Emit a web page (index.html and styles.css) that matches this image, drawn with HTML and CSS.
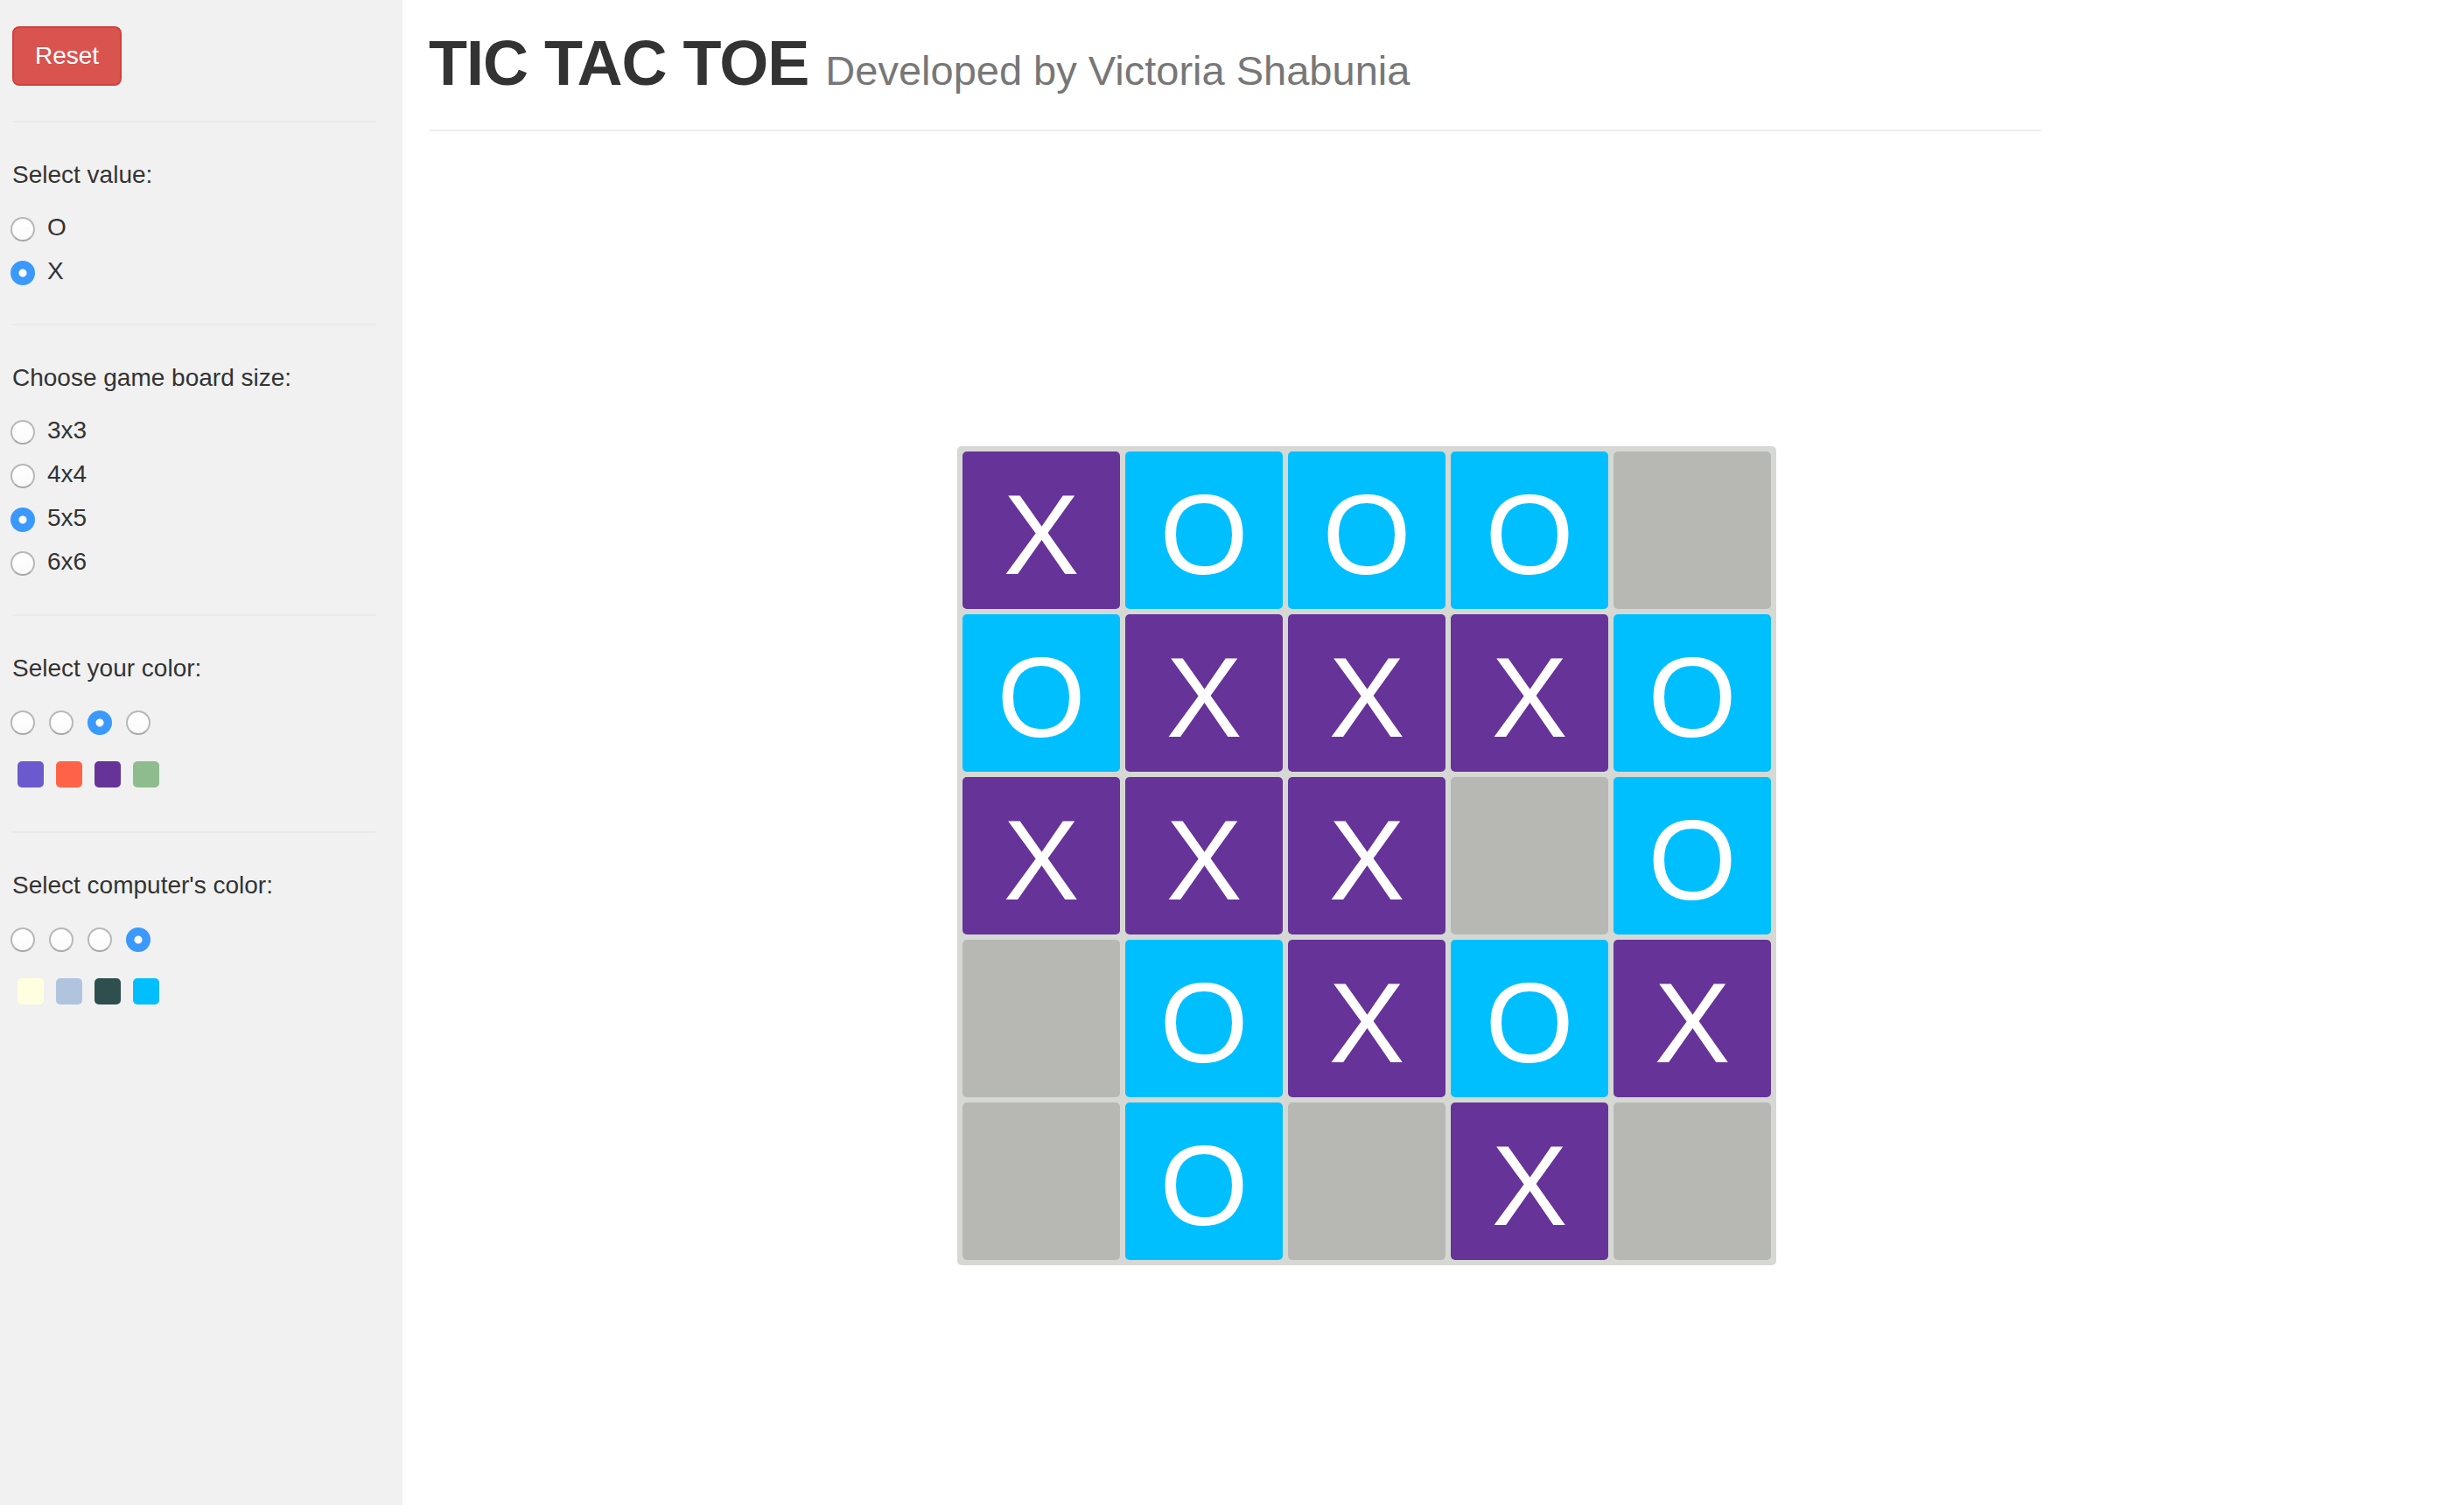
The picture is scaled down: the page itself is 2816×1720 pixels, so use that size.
FILE: index.html
```html
<!DOCTYPE html>
<html>
  <head>
    <title>Tic Tac Toe</title>
    <link rel="stylesheet" href="styles.css">
  </head>
  <body>
    <div class="sidebar">
      <button class="btn-reset" type="button">Reset</button>

      <hr>

      <div class="field-label">Select value:</div>
      <div class="radio"><input type="radio" name="value" id="value-o"><label for="value-o">O</label></div>
      <div class="radio"><input type="radio" name="value" id="value-x" checked><label for="value-x">X</label></div>

      <hr>

      <div class="field-label">Choose game board size:</div>
      <div class="radio"><input type="radio" name="size" id="size-3"><label for="size-3">3x3</label></div>
      <div class="radio"><input type="radio" name="size" id="size-4"><label for="size-4">4x4</label></div>
      <div class="radio"><input type="radio" name="size" id="size-5" checked><label for="size-5">5x5</label></div>
      <div class="radio"><input type="radio" name="size" id="size-6"><label for="size-6">6x6</label></div>

      <hr>

      <div class="field-label">Select your color:</div>
      <div class="radio-inline">
        <input type="radio" name="user-color">
        <input type="radio" name="user-color">
        <input type="radio" name="user-color" checked>
        <input type="radio" name="user-color">
      </div>
      <div class="swatches">
        <span class="swatch slateblue"></span>
        <span class="swatch tomato"></span>
        <span class="swatch rebeccapurple"></span>
        <span class="swatch darkseagreen"></span>
      </div>

      <hr class="hr-loose">

      <div class="field-label">Select computer's color:</div>
      <div class="radio-inline">
        <input type="radio" name="comp-color">
        <input type="radio" name="comp-color">
        <input type="radio" name="comp-color">
        <input type="radio" name="comp-color" checked>
      </div>
      <div class="swatches">
        <span class="swatch lightyellow"></span>
        <span class="swatch lightsteelblue"></span>
        <span class="swatch darkslategray"></span>
        <span class="swatch deepskyblue"></span>
      </div>
    </div>

    <div class="main">
      <div class="page-header">
        <h1>TIC TAC TOE <small>Developed by Victoria Shabunia</small></h1>
      </div>

      <div class="board">
        <div class="cell x">X</div>
        <div class="cell o">O</div>
        <div class="cell o">O</div>
        <div class="cell o">O</div>
        <div class="cell"></div>

        <div class="cell o">O</div>
        <div class="cell x">X</div>
        <div class="cell x">X</div>
        <div class="cell x">X</div>
        <div class="cell o">O</div>

        <div class="cell x">X</div>
        <div class="cell x">X</div>
        <div class="cell x">X</div>
        <div class="cell"></div>
        <div class="cell o">O</div>

        <div class="cell"></div>
        <div class="cell o">O</div>
        <div class="cell x">X</div>
        <div class="cell o">O</div>
        <div class="cell x">X</div>

        <div class="cell"></div>
        <div class="cell o">O</div>
        <div class="cell"></div>
        <div class="cell x">X</div>
        <div class="cell"></div>
      </div>
    </div>
  </body>
</html>
```

FILE: styles.css
```css
* {
    box-sizing: border-box;
}

html, body {
    height: 100%;
}

body {
    margin: 0;
    display: flex;
    font-family: "Liberation Sans", Arial, sans-serif;
    font-size: 28px;
    line-height: 40px;
    color: #333;
    background: #fff;
}

/* sidebar */

.sidebar {
    width: 460px;
    flex: none;
    background: #f1f1f1;
    padding: 30px 30px 0 14px;
}

.btn-reset {
    display: block;
    margin: 0;
    padding: 12px 24px;
    font: 28px/40px "Liberation Sans", Arial, sans-serif;
    color: #fff;
    background: #d9534f;
    border: 2px solid #d43f3a;
    border-radius: 8px;
}

hr {
    margin: 40px 0;
    border: 0;
    border-top: 2px solid #eaeaea;
}

hr.hr-loose {
    margin-top: 50px;
}

.field-label {
    margin-bottom: 20px;
}

.radio {
    display: flex;
    align-items: center;
    height: 40px;
    margin-bottom: 10px;
}

.radio label {
    margin-left: 14px;
}

.radio-inline {
    display: flex;
    align-items: center;
    gap: 16px;
    height: 40px;
}

input[type="radio"] {
    appearance: none;
    -webkit-appearance: none;
    width: 28px;
    height: 28px;
    margin: 4px 0 0 -2px;
    border-radius: 50%;
    border: 2px solid #b8b8b8;
    border-bottom-color: #a8a8a8;
    background: linear-gradient(#fff, #fafafa);
    flex: none;
}

.radio-inline input[type="radio"] + input[type="radio"] {
    margin-left: 0;
}

input[type="radio"]:checked {
    border-color: #3b99fc;
    background: radial-gradient(circle, #fff 0 4px, #3b99fc 5px);
}

.swatches {
    display: flex;
    gap: 14px;
    margin: 26px 0 0 6px;
}

.swatch {
    width: 30px;
    height: 30px;
    border-radius: 5px;
}

.slateblue { background: #6a5acd; }
.tomato { background: #ff6347; }
.rebeccapurple { background: #663399; }
.darkseagreen { background: #8fbc8f; }
.lightyellow { background: #ffffe0; }
.lightsteelblue { background: #b0c4de; }
.darkslategray { background: #2f4f4f; }
.deepskyblue { background: #00bfff; }

/* main */

.main {
    flex: 1;
    padding-left: 30px;
}

.page-header {
    width: 1843px;
    padding: 32px 0 36px;
    border-bottom: 2px solid #eee;
}

.page-header h1 {
    margin: 0;
    font-size: 72px;
    line-height: 80px;
    font-weight: 600;
    color: #333;
    letter-spacing: -1px;
}

.page-header small {
    font-size: 47px;
    line-height: 1;
    font-weight: normal;
    color: #777;
    letter-spacing: 0;
}

.board {
    display: grid;
    grid-template-columns: repeat(5, 180px);
    grid-auto-rows: 180px;
    gap: 6px;
    width: max-content;
    padding: 6px;
    margin: 360px 0 0 604px;
    background: #d6d8d4;
    border-radius: 5px;
}

.cell {
    border-radius: 5px;
    background: #b7b8b4;
    color: #fff;
    font-size: 130px;
    line-height: 190px;
    text-align: center;
}

.cell.x {
    background: #663399;
}

.cell.o {
    background: #00bfff;
}
```
